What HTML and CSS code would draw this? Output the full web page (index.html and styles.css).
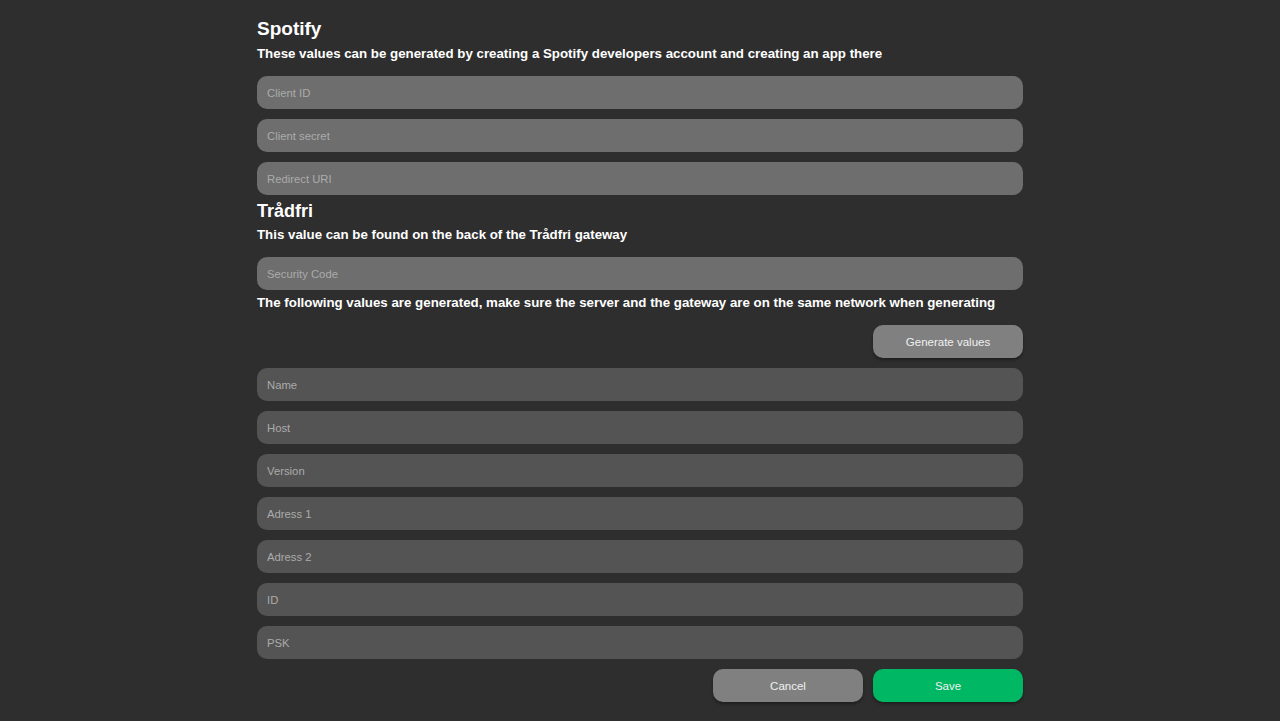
FILE: index.html
```html
<!DOCTYPE html>
<html>
<head>
<meta charset="utf-8">
<link rel="stylesheet" href="styles.css">
</head>
<body>
<main class="settings">
  <h2 class="section-title">Spotify</h2>
  <p class="section-note">These values can be generated by creating a Spotify developers account and creating an app there</p>
  <div class="fields">
    <input class="field field-light" placeholder="Client ID">
    <input class="field field-light" placeholder="Client secret">
    <input class="field field-light" placeholder="Redirect URI">
  </div>
  <h2 class="section-title title-tight">Trådfri</h2>
  <p class="section-note">This value can be found on the back of the Trådfri gateway</p>
  <div class="fields">
    <input class="field field-light" placeholder="Security Code">
  </div>
  <p class="section-note note-tight">The following values are generated, make sure the server and the gateway are on the same network when generating</p>
  <div class="actions actions-gen">
    <button class="btn btn-grey">Generate values</button>
  </div>
  <div class="fields">
    <input class="field field-dark" placeholder="Name">
    <input class="field field-dark" placeholder="Host">
    <input class="field field-dark" placeholder="Version">
    <input class="field field-dark" placeholder="Adress 1">
    <input class="field field-dark" placeholder="Adress 2">
    <input class="field field-dark" placeholder="ID">
    <input class="field field-dark" placeholder="PSK">
  </div>
  <div class="actions actions-bottom">
    <button class="btn btn-grey">Cancel</button>
    <button class="btn btn-green">Save</button>
  </div>
</main>
</body>
</html>
```

FILE: styles.css
```css
html, body {
  margin: 0;
  padding: 0;
  background: #2e2e2e;
  height: 100%;
}
body {
  font-family: "Liberation Sans", Arial, sans-serif;
  color: #ffffff;
  overflow: hidden;
}
.settings {
  width: 766px;
  margin: 0 auto;
  padding-top: 18px;
  display: flex;
  flex-direction: column;
}
.section-title {
  font-size: 19px;
  line-height: 22px;
  font-weight: bold;
  margin: 0 0 6px 0;
}
.title-tight {
  margin: 5px 0 5px 0;
  font-size: 18px;
}
.section-note {
  font-size: 13.3px;
  line-height: 16px;
  font-weight: bold;
  margin: 0 0 14px 0;
}
.note-tight {
  margin: 5px 0 14px 0;
}
.fields {
  display: flex;
  flex-direction: column;
  gap: 10px;
}
.field {
  box-sizing: border-box;
  height: 33px;
  border: none;
  border-radius: 10px;
  padding: 0 10px;
  font-family: "Liberation Sans", Arial, sans-serif;
  font-size: 11.3px;
  color: #ffffff;
  outline: none;
}
.field::placeholder {
  color: #ababab;
}
.field-light {
  background: #6e6e6e;
}
.field-dark {
  background: #545454;
}
.actions {
  display: flex;
  justify-content: flex-end;
  gap: 10px;
}
.actions-gen {
  margin-bottom: 10px;
}
.actions-bottom {
  margin-top: 10px;
}
.btn {
  width: 150px;
  height: 33px;
  border: none;
  border-radius: 10px;
  font-family: "Liberation Sans", Arial, sans-serif;
  font-size: 11.5px;
  color: #f0f0f0;
  box-shadow: 0 2px 3px rgba(0, 0, 0, 0.35);
  cursor: pointer;
}
.btn-grey {
  background: #808080;
}
.btn-green {
  background: #00b863;
}
```
